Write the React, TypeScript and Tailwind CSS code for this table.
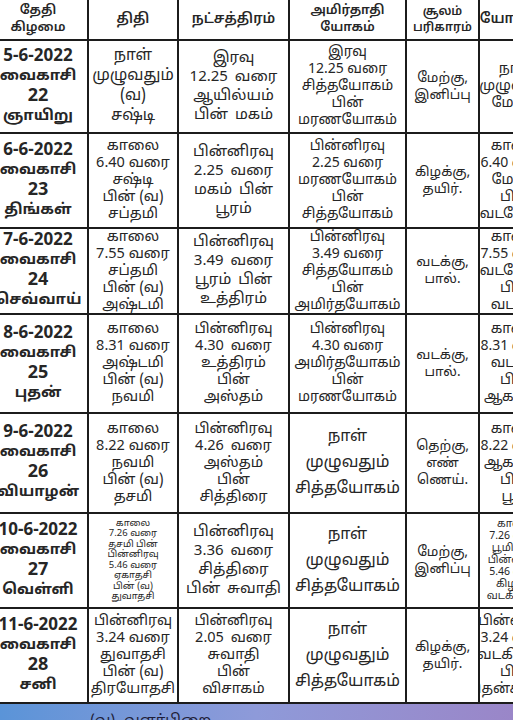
import React from "react";

type Row = {
  date: string;
  day: string;
  num: string;
  weekday: string;
  thithi: string[];
  thithiSmall?: boolean;
  star: string[];
  amirtha: string[];
  amirthaWide?: boolean;
  soolam: string[];
  yogini: string[];
  yoginiSmall?: boolean;
};

const ROWS: Row[] = [
  {
    date: "5-6-2022", day: "வைகாசி", num: "22", weekday: "ஞாயிறு",
    thithi: ["நாள்", "முழுவதும்", "(வ)", "சஷ்டி"],
    star: ["இரவு", "12.25 வரை", "ஆயில்யம்", "பின் மகம்"],
    amirtha: ["இரவு", "12.25 வரை", "சித்தயோகம்", "பின்", "மரணயோகம்"],
    soolam: ["மேற்கு,", "இனிப்பு"],
    yogini: ["நாள்", "முழுவதும்", "மேற்கு"],
  },
  {
    date: "6-6-2022", day: "வைகாசி", num: "23", weekday: "திங்கள்",
    thithi: ["காலை", "6.40 வரை", "சஷ்டி", "பின் (வ)", "சப்தமி"],
    star: ["பின்னிரவு", "2.25 வரை", "மகம் பின்", "பூரம்"],
    amirtha: ["பின்னிரவு", "2.25 வரை", "மரணயோகம்", "பின்", "சித்தயோகம்"],
    soolam: ["கிழக்கு,", "தயிர்."],
    yogini: ["காலை", "6.40 வரை", "மேற்கு", "பின்", "வடமேற்கு"],
  },
  {
    date: "7-6-2022", day: "வைகாசி", num: "24", weekday: "செவ்வாய்",
    thithi: ["காலை", "7.55 வரை", "சப்தமி", "பின் (வ)", "அஷ்டமி"],
    star: ["பின்னிரவு", "3.49 வரை", "பூரம் பின்", "உத்திரம்"],
    amirtha: ["பின்னிரவு", "3.49 வரை", "சித்தயோகம்", "பின்", "அமிர்தயோகம்"],
    soolam: ["வடக்கு,", "பால்."],
    yogini: ["காலை", "7.55 வரை", "வடமேற்கு", "பின்", "வடக்கு"],
  },
  {
    date: "8-6-2022", day: "வைகாசி", num: "25", weekday: "புதன்",
    thithi: ["காலை", "8.31 வரை", "அஷ்டமி", "பின் (வ)", "நவமி"],
    star: ["பின்னிரவு", "4.30 வரை", "உத்திரம்", "பின்", "அஸ்தம்"],
    amirtha: ["பின்னிரவு", "4.30 வரை", "அமிர்தயோகம்", "பின்", "மரணயோகம்"],
    soolam: ["வடக்கு,", "பால்."],
    yogini: ["காலை", "8.31 வரை", "வடக்கு", "பின்", "ஆகாயம்"],
  },
  {
    date: "9-6-2022", day: "வைகாசி", num: "26", weekday: "வியாழன்",
    thithi: ["காலை", "8.22 வரை", "நவமி", "பின் (வ)", "தசமி"],
    star: ["பின்னிரவு", "4.26 வரை", "அஸ்தம்", "பின்", "சித்திரை"],
    amirtha: ["நாள்", "முழுவதும்", "சித்தயோகம்"],
    amirthaWide: true,
    soolam: ["தெற்கு,", "எண்", "ணெய்."],
    yogini: ["காலை", "8.22 வரை", "ஆகாயம்", "பின்", "பூமி"],
  },
  {
    date: "10-6-2022", day: "வைகாசி", num: "27", weekday: "வெள்ளி",
    thithi: ["காலை", "7.26 வரை", "தசமி பின்", "பின்னிரவு", "5.46 வரை", "ஏகாதசி", "பின் (வ)", "துவாதசி"],
    thithiSmall: true,
    star: ["பின்னிரவு", "3.36 வரை", "சித்திரை", "பின் சுவாதி"],
    amirtha: ["நாள்", "முழுவதும்", "சித்தயோகம்"],
    amirthaWide: true,
    soolam: ["மேற்கு,", "இனிப்பு"],
    yogini: ["காலை", "7.26 வரை", "பூமி பின்", "பின்னிரவு", "5.46 வரை", "கிழக்கு", "வடகிழக்கு"],
    yoginiSmall: true,
  },
  {
    date: "11-6-2022", day: "வைகாசி", num: "28", weekday: "சனி",
    thithi: ["பின்னிரவு", "3.24 வரை", "துவாதசி", "பின் (வ)", "திரயோதசி"],
    star: ["பின்னிரவு", "2.05 வரை", "சுவாதி", "பின்", "விசாகம்"],
    amirtha: ["நாள்", "முழுவதும்", "சித்தயோகம்"],
    amirthaWide: true,
    soolam: ["கிழக்கு,", "தயிர்."],
    yogini: ["பின்னிரவு", "3.24 வரை", "வடகிழக்கு", "பின்", "தென்கிழக்கு"],
  },
];

function Lines({ lines, className }: { lines: string[]; className: string }) {
  return (
    <div className={`flex flex-col items-center justify-center text-center bg-white text-[#262626] whitespace-nowrap overflow-hidden ${className}`}>
      {lines.map((l, i) => (
        <span key={i}>{l}</span>
      ))}
    </div>
  );
}

export default function App() {
  return (
    <div
      className="w-[513px] h-[720px] overflow-hidden bg-white flex flex-col"
      style={{ fontFamily: '"Noto Sans Tamil", "Latha", "Noto Sans", "DejaVu Sans", sans-serif' }}
    >
      {/* Table */}
      <div className="ml-[-11px] w-[620px] bg-[#1c1c1c] grid gap-[2px] pb-[2px] grid-cols-[98px_88px_109px_115px_71px_72px] grid-rows-[39px_91px_93px_84px_97px_98px_93px_93px]">
        {/* Header */}
        <Lines lines={["தேதி", "கிழமை"]} className="text-[13px] leading-[17px] font-semibold" />
        <Lines lines={["திதி"]} className="text-[14px] font-semibold" />
        <Lines lines={["நட்சத்திரம்"]} className="text-[14px] font-semibold" />
        <Lines lines={["அமிர்தாதி", "யோகம்"]} className="text-[13px] leading-[17px] font-semibold" />
        <Lines lines={["சூலம்", "பரிகாரம்"]} className="text-[12px] leading-[16px] font-semibold" />
        <Lines lines={["யோகினி"]} className="text-[14px] font-semibold" />

        {ROWS.map((r) => (
          <React.Fragment key={r.date}>
            <Lines
              lines={[r.date, r.day, r.num, r.weekday]}
              className="text-[15px] leading-[20px] font-bold text-[#1a1a1a] [&>span:nth-child(1)]:text-[17px] [&>span:nth-child(3)]:text-[18px]"
            />
            <Lines
              lines={r.thithi}
              className={r.thithiSmall ? "text-[9.5px] leading-[10.5px]" : r.thithi.length > 4 ? "text-[14.5px] leading-[17px]" : "text-[15.5px] leading-[20px]"}
            />
            <Lines
              lines={r.star}
              className={`[word-spacing:3px] ${r.star.length > 4 ? "text-[14.5px] leading-[17px]" : "text-[15px] leading-[19px]"}`}
            />
            <Lines
              lines={r.amirtha}
              className={r.amirthaWide ? "text-[16px] leading-[26px]" : "text-[14px] leading-[17px]"}
            />
            <Lines lines={r.soolam} className="text-[13.5px] leading-[17px]" />
            <Lines
              lines={r.yogini}
              className={r.yoginiSmall ? "text-[10.5px] leading-[12px]" : "text-[14px] leading-[17px]"}
            />
          </React.Fragment>
        ))}
      </div>

      {/* Footer strip */}
      <div className="flex-1 bg-gradient-to-r from-[#5a94d8] via-[#8e9ad9] to-[#9a86c8] pl-[90px] pt-[10px] text-[15px] leading-[16px] text-[#1f1f3a]">
        (வ)- வளர்பிறை
      </div>
    </div>
  );
}
